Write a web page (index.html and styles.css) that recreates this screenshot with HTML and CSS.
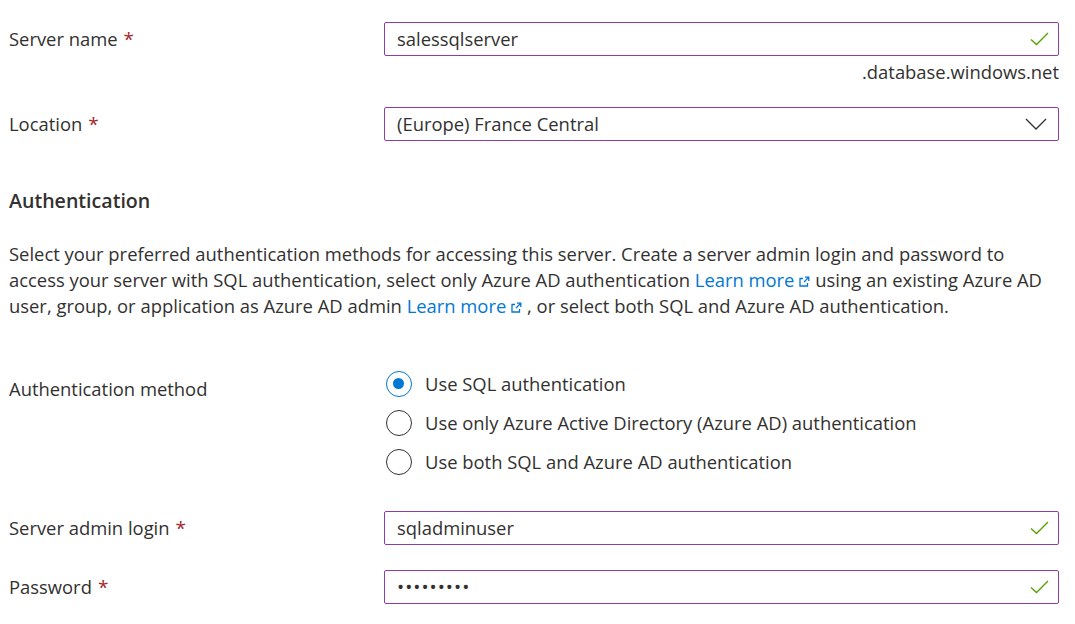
FILE: index.html
```html
<!DOCTYPE html>
<html>
<head>
<meta charset="utf-8">
<link rel="stylesheet" href="styles.css">
</head>
<body>
<div class="page">
  <div class="row">
    <div class="label">Server name <span class="req">*</span></div>
    <div class="control">
      <div class="input valid">
        <span class="value">salessqlserver</span>
        <svg class="check" width="19" height="14" viewBox="0 0 19 14"><path d="M1 7.5 L6.5 12.5 L18 1" fill="none" stroke="#57a300" stroke-width="1.4"/></svg>
      </div>
      <div class="hint">.database.windows.net</div>
    </div>
  </div>

  <div class="row row-location">
    <div class="label">Location <span class="req">*</span></div>
    <div class="control">
      <div class="input">
        <span class="value">(Europe) France Central</span>
        <svg class="chev" width="22" height="12" viewBox="0 0 22 12"><path d="M1 1 L11 11 L21 1" fill="none" stroke="#323130" stroke-width="1.3"/></svg>
      </div>
    </div>
  </div>

  <h2 class="section">Authentication</h2>

  <p class="desc">Select your preferred authentication methods for accessing this server. Create a server admin login and password to<br>access your server with SQL authentication, select only Azure AD authentication <a class="link" href="#">Learn more<svg class="ext" width="12" height="12" viewBox="0 0 12 12"><path d="M5 2.5 H2 V10 H9.5 V7" fill="none" stroke="#0078d4" stroke-width="1.3"/><path d="M6 6 L10.5 1.5 M7 1.2 H10.8 V5" fill="none" stroke="#0078d4" stroke-width="1.3"/></svg></a> using an existing Azure AD<br>user, group, or application as Azure AD admin <a class="link" href="#">Learn more<svg class="ext" width="12" height="12" viewBox="0 0 12 12"><path d="M5 2.5 H2 V10 H9.5 V7" fill="none" stroke="#0078d4" stroke-width="1.3"/><path d="M6 6 L10.5 1.5 M7 1.2 H10.8 V5" fill="none" stroke="#0078d4" stroke-width="1.3"/></svg></a> , or select both SQL and Azure AD authentication.</p>

  <div class="row row-method">
    <div class="label label-method">Authentication method</div>
    <div class="control radios">
      <div class="radio"><span class="circle on"></span><span>Use SQL authentication</span></div>
      <div class="radio"><span class="circle"></span><span>Use only Azure Active Directory (Azure AD) authentication</span></div>
      <div class="radio"><span class="circle"></span><span>Use both SQL and Azure AD authentication</span></div>
    </div>
  </div>

  <div class="row row-login">
    <div class="label">Server admin login <span class="req">*</span></div>
    <div class="control">
      <div class="input valid">
        <span class="value">sqladminuser</span>
        <svg class="check" width="19" height="14" viewBox="0 0 19 14"><path d="M1 7.5 L6.5 12.5 L18 1" fill="none" stroke="#57a300" stroke-width="1.4"/></svg>
      </div>
    </div>
  </div>

  <div class="row row-pass">
    <div class="label">Password <span class="req">*</span></div>
    <div class="control">
      <div class="input valid">
        <span class="value dots">•••••••••</span>
        <svg class="check" width="19" height="14" viewBox="0 0 19 14"><path d="M1 7.5 L6.5 12.5 L18 1" fill="none" stroke="#57a300" stroke-width="1.4"/></svg>
      </div>
    </div>
  </div>
</div>
</body>
</html>
```

FILE: styles.css
```css
html, body {
  margin: 0;
  padding: 0;
  background: #ffffff;
}
body {
  font-family: "Open Sans", "Noto Sans", sans-serif;
  font-size: 18.4px;
  color: #323130;
  line-height: 26px;
}
.page {
  padding: 22px 16px 0 9px;
  width: 1050px;
}
.row {
  display: flex;
  align-items: flex-start;
}
.label {
  width: 375px;
  flex: none;
  height: 34px;
  display: flex;
  align-items: center;
  white-space: nowrap;
}
.req {
  color: #a4262c;
  margin-left: 6px;
  font-size: 19px;
}
.control {
  width: 675px;
  flex: none;
}
.input {
  height: 34px;
  box-sizing: border-box;
  border: 1px solid #8a3ea9;
  border-radius: 2px;
  display: flex;
  align-items: center;
  padding: 0 9px 0 12px;
}
.value {
  flex: 1;
}
.dots {
  font-size: 19px;
  letter-spacing: 1px;
}
.chev {
  margin-right: 2px;
}
.hint {
  text-align: right;
  height: 26px;
  margin-top: 3px;
}
.row-location {
  margin-top: 22px;
}
.section {
  margin: 47px 0 0 0;
  font-size: 19.6px;
  font-weight: 600;
  line-height: 26px;
}
.desc {
  margin: 27px 0 0 0;
  white-space: nowrap;
}
.link {
  color: #0078d4;
  text-decoration: none;
}
.ext {
  margin-left: 4px;
  vertical-align: -1px;
}
.row-method {
  margin-top: 52px;
}
.label-method {
  height: 26px;
  padding-top: 5px;
}
.radios {
  display: flex;
  flex-direction: column;
  gap: 13px;
}
.radio {
  display: flex;
  align-items: center;
  height: 26px;
}
.circle {
  width: 26px;
  height: 26px;
  box-sizing: border-box;
  border: 1.5px solid #323130;
  border-radius: 50%;
  margin-left: 2px;
  margin-right: 13px;
  position: relative;
  flex: none;
}
.circle.on {
  border-color: #0078d4;
}
.circle.on::after {
  content: "";
  position: absolute;
  left: 6px;
  top: 6px;
  width: 11px;
  height: 11px;
  border-radius: 50%;
  background: #0078d4;
}
.row-login {
  margin-top: 36px;
}
.row-pass {
  margin-top: 25px;
}
```
